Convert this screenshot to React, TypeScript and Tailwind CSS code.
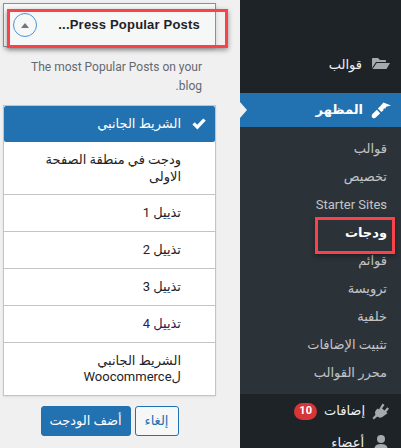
const ar = "font-['Roboto','DejaVu_Sans',sans-serif]";

const rows = ["تذييل 1", "تذييل 2", "تذييل 3", "تذييل 4"];
const subItems = [
  "قوالب",
  "تخصيص",
  "Starter Sites",
  "ودجات",
  "قوائم",
  "ترويسة",
  "خلفية",
  "تثبيت الإضافات",
  "محرر القوالب",
];

function FolderIcon() {
  return (
    <svg width="18" height="11" viewBox="0 0 18 11" className="mb-[3px] fill-[#a7aaad]">
      <path d="M0 1 C0 .4 .4 0 1 0 H6 L8 2 H13 C13.6 2 14 2.4 14 3 V4 H4 L0 10 Z" />
      <path d="M4.7 5 H18 L14.5 11 H.6 Z" />
    </svg>
  );
}

function BrushIcon() {
  return (
    <svg width="20" height="20" viewBox="0 0 20 20" className="fill-white">
      <path d="M1.5 14 L5.8 9.8 L9.2 13.2 L4.8 17.6 C3.6 18.6 2.2 18.4 1.2 17.4 C.4 16.4 .5 15 1.5 14 Z" />
      <path d="M6.8 8.6 L10.2 12 L12.2 10.4 L12.8 8.2 L14.2 8.8 L15.2 6.8 L20 5.6 L12.4 2.4 L9.2 6.2 Z" />
    </svg>
  );
}

function PlugIcon() {
  return (
    <svg width="18" height="18" viewBox="0 0 18 18" className="fill-[#a7aaad]">
      <path d="M10.5 1.5 L12.5 3 L10 6.5 L12.5 8.5 L15.3 5.3 L17 6.8 L14.3 10 L15.5 11.2 L10 15.2 C8 16.2 6.5 15.5 5.3 14.5 L1.8 17.5 L.5 16 L3.5 12.8 C2.7 11 3 9.5 4 8.2 L5.5 6.5 L7 7.5 Z" />
    </svg>
  );
}

function UserIcon() {
  return (
    <svg width="18" height="18" viewBox="0 0 18 18" className="fill-[#a7aaad]">
      <circle cx="9" cy="5" r="4" />
      <path d="M2 17 C2 11.5 5 10 9 10 C13 10 16 11.5 16 17 Z" />
    </svg>
  );
}

function WidgetPanel() {
  return (
    <div className="flex w-[240px] shrink-0 flex-col bg-[#f0f0f0] pt-[3px] pr-[24px] pl-[3px]">
      <div className="relative flex h-[44px] shrink-0 items-center justify-between border border-[#8c8f94] bg-[#f6f7f7] pr-[15px] pl-[9px] shadow-[0_2px_4px_rgba(0,0,0,0.15)]">
        <span className="flex h-6 w-6 items-center justify-center rounded-full border border-[#4f94d4] bg-[#f6f7f7]">
          <span className="h-0 w-0 border-x-[4px] border-b-[5px] border-x-transparent border-b-[#72777c]" />
        </span>
        <span dir="rtl" className="font-['Liberation_Sans',sans-serif] text-[13px] font-bold tracking-[0.2px] text-[#1d2327]">
          Press Popular Posts...
        </span>
        <div className="absolute top-[5px] left-[3px] h-[39px] w-[221px] border-[3px] border-[#f9424a] shadow-[0_2px_5px_rgba(0,0,0,0.4)]" />
      </div>
      <p dir="rtl" className={`mt-[11px] shrink-0 pr-[14px] pl-[14px] text-[12px] leading-[19px] text-[#646970] ${ar}`}>
        The most Popular Posts on your blog.
      </p>
      <div dir="rtl" className={`mt-[9px] shrink-0 border border-[#c3c4c7] bg-white text-[13px] text-[#1d2327] shadow-[0_1px_2px_rgba(0,0,0,0.08)] ${ar}`}>
        <div className="flex h-[36px] items-center gap-[11px] rounded-[2px] bg-[#2271b1] pr-[9px] text-white">
          <svg width="14" height="12" viewBox="0 0 14 12" className="fill-white">
            <path d="M0.4 6.4 L2.8 4.2 L5.2 6.8 L11.2 0.4 L13.8 2.4 L5.4 11.6 Z" />
          </svg>
          <span>الشريط الجانبي</span>
        </div>
        <div className="border-b border-[#c3c4c7] py-[9px] pr-[34px] pl-[10px] leading-[17px]">
          ودجت في منطقة الصفحة الاولى
        </div>
        {rows.map((row, i) => (
          <div key={row} className={`flex h-[37px] items-center border-b border-[#c3c4c7] pr-[34px] ${i === 3 ? "text-[#2c1a5c]" : ""}`}>
            {row}
          </div>
        ))}
        <div className="py-[10px] pr-[34px] pl-[10px] leading-[16px]">
          الشريط الجانبي لWoocommerce
        </div>
      </div>
      <div dir="rtl" className={`mt-[10px] flex shrink-0 justify-center gap-[4px] text-[13px] ${ar}`}>
        <button className="h-[30px] w-[44px] rounded-[3px] border border-[#2271b1] bg-[#f6f7f7] text-[#2271b1]">إلغاء</button>
        <button className="h-[30px] w-[90px] rounded-[3px] border border-[#2271b1] bg-[#2271b1] text-white">أضف الودجت</button>
      </div>
    </div>
  );
}

function AdminMenu() {
  return (
    <div dir="rtl" className={`relative flex min-w-0 flex-1 flex-col bg-[#1d2327] pt-[48px] text-[13px] text-[#f0f0f1] ${ar}`}>
      <div className="flex h-[34px] shrink-0 items-center gap-[10px] pr-[11px]">
        <FolderIcon />
        <span>قوالب</span>
      </div>
      <div className="mt-[11px] flex h-[34px] shrink-0 items-center gap-[8px] bg-[#2271b1] pr-[10px] font-semibold text-white">
        <BrushIcon />
        <span>المظهر</span>
        <span className="absolute top-[102px] left-0 h-0 w-0 border-y-[8px] border-l-[7px] border-y-transparent border-l-[#f0f0f0]" />
      </div>
      <div className="flex h-[267px] shrink-0 flex-col bg-[#2c3338] pt-[8px] pr-[14px] text-[#c3c4c7]">
        {subItems.map((item) => (
          <div key={item} className={`flex h-[28px] shrink-0 items-center ${item === "ودجات" ? "font-bold text-white" : ""}`}>
            {item}
          </div>
        ))}
      </div>
      <div className="flex h-[34px] shrink-0 items-center gap-[7px] pr-[11px]">
        <PlugIcon />
        <span>إضافات</span>
        <span className="flex h-[17px] items-center rounded-full bg-[#d63638] px-[5px] text-[11px] font-bold text-white">10</span>
      </div>
      <div className="flex h-[30px] shrink-0 items-center gap-[8px] pr-[11px]">
        <UserIcon />
        <span>أعضاء</span>
      </div>
      <div className="absolute top-[217px] left-[75px] h-[37px] w-[80px] border-[3px] border-[#f9424a] shadow-[0_2px_5px_rgba(0,0,0,0.4)]" />
    </div>
  );
}

export default function App() {
  return (
    <div className="flex h-[448px] w-[401px] overflow-hidden">
      <WidgetPanel />
      <AdminMenu />
    </div>
  );
}
